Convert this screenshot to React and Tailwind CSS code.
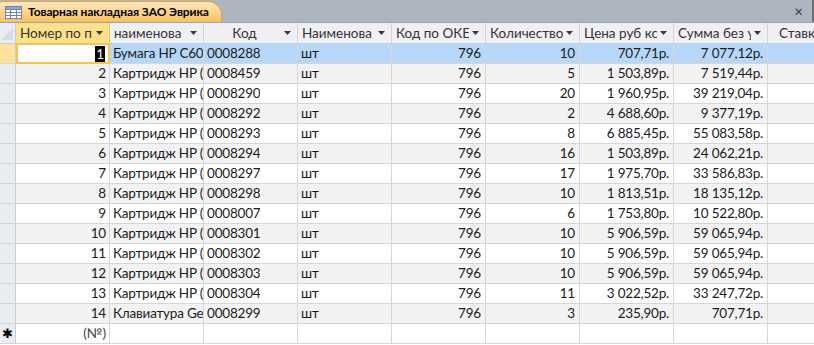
import React from "react";

const rows = [
  [1, "Бумага HP C60", "0008288", "шт", "796", "10", "707,71р.", "7 077,12р."],
  [2, "Картридж HP (", "0008459", "шт", "796", "5", "1 503,89р.", "7 519,44р."],
  [3, "Картридж HP (", "0008290", "шт", "796", "20", "1 960,95р.", "39 219,04р."],
  [4, "Картридж HP (", "0008292", "шт", "796", "2", "4 688,60р.", "9 377,19р."],
  [5, "Картридж HP (", "0008293", "шт", "796", "8", "6 885,45р.", "55 083,58р."],
  [6, "Картридж HP (", "0008294", "шт", "796", "16", "1 503,89р.", "24 062,21р."],
  [7, "Картридж HP (", "0008297", "шт", "796", "17", "1 975,70р.", "33 586,83р."],
  [8, "Картридж HP (", "0008298", "шт", "796", "10", "1 813,51р.", "18 135,12р."],
  [9, "Картридж HP (", "0008007", "шт", "796", "6", "1 753,80р.", "10 522,80р."],
  [10, "Картридж HP (", "0008301", "шт", "796", "10", "5 906,59р.", "59 065,94р."],
  [11, "Картридж HP (", "0008302", "шт", "796", "10", "5 906,59р.", "59 065,94р."],
  [12, "Картридж HP (", "0008303", "шт", "796", "10", "5 906,59р.", "59 065,94р."],
  [13, "Картридж HP (", "0008304", "шт", "796", "11", "3 022,52р.", "33 247,72р."],
  [14, "Клавиатура Ge", "0008299", "шт", "796", "3", "235,90р.", "707,71р."],
];

const headers = [
  { t: "Номер по п", align: "left" },
  { t: "наименова", align: "left" },
  { t: "Код", align: "center" },
  { t: "Наименова", align: "left" },
  { t: "Код по ОКЕ", align: "left" },
  { t: "Количество", align: "left" },
  { t: "Цена руб кс", align: "left" },
  { t: "Сумма без у", align: "left" },
];

const Arrow = () => (
  <svg width="7" height="4" viewBox="0 0 7 4" className="shrink-0">
    <path d="M0 0 H7 L3.5 4 Z" fill="#3b3b3b" />
  </svg>
);

const TableIcon = () => (
  <svg width="17" height="13" viewBox="0 0 17 13">
    <rect x="0.5" y="0.5" width="16" height="12" fill="#ffffff" stroke="#6b86b5" />
    <rect x="0.5" y="0.5" width="16" height="3" fill="#8fa9d6" stroke="#6b86b5" />
    <path d="M0.5 6.5 H16.5 M0.5 9.5 H16.5 M5.5 3.5 V12.5 M11.5 3.5 V12.5" stroke="#6b86b5" />
  </svg>
);

export default function App() {
  return (
    <div
      className="w-[814px] h-[345px] overflow-hidden bg-white text-[#1b1b1b]"
      style={{ fontFamily: "Lato, 'Noto Sans', sans-serif" }}
    >
      {/* Title bar */}
      <div className="h-[23px] bg-[#adb5c0] flex items-end relative border-b border-[#9aa3ae]">
        <div className="h-[21px] w-[222px] flex items-center gap-[6px] pl-[5px] rounded-tr-[14px] bg-gradient-to-b from-[#fde7bd] via-[#fbd58a] to-[#f7c060] border-t border-r border-[#e0a64a] rounded-tl-[2px]">
          <TableIcon />
          <span className="text-[12px] font-bold text-black whitespace-nowrap tracking-[-0.1px]">
            Товарная накладная ЗАО Эврика
          </span>
        </div>
        <div className="flex-1" />
        <div className="h-full flex items-center pr-[9px] text-[#3c3c3c] text-[15px] leading-none">×</div>
        <div className="w-[2px] h-full bg-[#6a6f76]" />
      </div>

      {/* Header row */}
      <div className="flex h-[21px] bg-[#eef0f3] border-b border-[#c9ced6] text-[13.5px]">
        <div className="w-[16px] shrink-0 border-r border-[#c9ced6] relative bg-[#e9ecf0]">
          <svg width="14" height="14" viewBox="0 0 14 14" className="absolute right-[1px] bottom-[2px]">
            <path d="M13 1 V13 H1 Z" fill="#d6dbe2" />
          </svg>
        </div>
        {headers.map((h, i) => (
          <div
            key={i}
            className={
              "w-[94px] shrink-0 border-r flex items-center gap-[3px] pl-[4px] pr-[6px] overflow-hidden " +
              (i === 0
                ? "bg-[#fde08a] border-[#f2c24f] text-[#333]"
                : "border-[#d0d5dc] text-[#333]")
            }
          >
            <span
              className={
                "flex-1 whitespace-nowrap overflow-hidden " +
                (h.align === "center" ? "text-center" : "text-left")
              }
            >
              {h.t}
            </span>
            <Arrow />
          </div>
        ))}
        <div className="flex-1 pl-[11px] flex items-center whitespace-nowrap overflow-hidden text-[#333]">
          Ставка НДС
        </div>
      </div>

      {/* Data rows */}
      {rows.map((r, idx) => {
        const sel = idx === 0;
        const bg = sel ? "bg-[#b7d7f8]" : idx % 2 === 1 ? "bg-[#f2f2f2]" : "bg-white";
        return (
          <div key={idx} className={"flex h-[20px] border-b border-[#d6d6d6] text-[13.5px] tracking-[-0.2px] " + bg}>
            <div
              className={
                "w-[16px] shrink-0 border-r border-[#c9ced6] " +
                (sel ? "bg-[#fde39a]" : "bg-[#e9ecf0]")
              }
            />
            <div
              className={
                "w-[94px] shrink-0 flex items-center justify-end pr-[3px] " +
                (sel
                  ? "bg-white border-2 border-[#f3c651] -mt-px h-[21px]"
                  : "border-r border-[#d6d6d6]")
              }
            >
              {sel ? (
                <span className="bg-black text-white leading-[16px] px-px">{r[0]}</span>
              ) : (
                <span>{r[0]}</span>
              )}
            </div>
            {[r[1], r[2], r[3]].map((t, j) => (
              <div
                key={j}
                className="w-[94px] shrink-0 border-r border-[#d6d6d6] flex items-center pl-[3px] overflow-hidden whitespace-nowrap"
              >
                <span className="overflow-hidden">{t}</span>
              </div>
            ))}
            {[r[4], r[5], r[6], r[7]].map((t, j) => (
              <div
                key={j}
                className="w-[94px] shrink-0 border-r border-[#d6d6d6] flex items-center justify-end pr-[4px] overflow-hidden whitespace-nowrap"
              >
                {t}
              </div>
            ))}
            <div className="flex-1" />
          </div>
        );
      })}

      {/* New record row */}
      <div className="flex h-[20px] border-b border-[#d6d6d6] text-[13.5px] bg-white">
        <div className="w-[16px] shrink-0 border-r border-[#c9ced6] bg-[#e9ecf0] flex items-center justify-center text-[13px] leading-none text-black">
          ✱
        </div>
        <div className="w-[94px] shrink-0 border-r border-[#d6d6d6] flex items-center justify-end pr-[3px] text-[#444]">
          (№)
        </div>
        {[0, 1, 2, 3, 4, 5, 6].map((j) => (
          <div key={j} className="w-[94px] shrink-0 border-r border-[#d6d6d6]" />
        ))}
        <div className="flex-1" />
      </div>
    </div>
  );
}
